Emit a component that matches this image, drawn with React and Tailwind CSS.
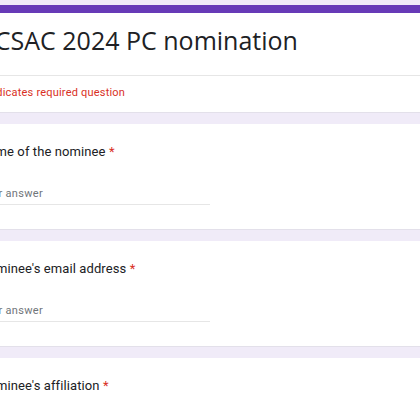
import React from "react";

const questions = [
  { id: 1, label: "Name of the nominee" },
  { id: 2, label: "Nominee's email address" },
  { id: 3, label: "Nominee's affiliation" },
];

function Question({ label }) {
  return (
    <div className="bg-white border-b border-[#e3e0ea] pt-[18px] h-[106px]">
      <div className="text-[13px] leading-[20px] text-[#202124] tracking-[0.1px]">
        {label} <span className="text-[#d93025]">*</span>
      </div>
      <div className="mt-[24px] w-[231px] border-b border-[#e6e6e6] pb-[2px]">
        <div className="text-[11px] leading-[16px] text-[#70757a] tracking-[0.3px]">
          Your answer
        </div>
      </div>
    </div>
  );
}

export default function App() {
  return (
    <div
      className="w-[420px] h-[420px] overflow-hidden bg-[#f0ebf8]"
      style={{ fontFamily: "Roboto, 'Liberation Sans', sans-serif" }}
    >
      <div className="-ml-[21px] pt-[5px] flex flex-col gap-[11px]">
        <div className="bg-white border-b border-[#e3e0ea]">
          <div className="h-[8px] bg-[#673ab7] -ml-[20px]" />
          <div
            className="pt-[11px] pb-[19px] text-[25px] leading-[32px] text-[#202124] border-b border-[#e6e6e6]"
            style={{ fontFamily: "'Open Sans', Roboto, sans-serif" }}
          >
            ACSAC 2024 PC nomination
          </div>
          <div className="pt-[9px] pb-[11px] text-[11px] leading-[16px] text-[#d93025] tracking-[0.2px]">
            * Indicates required question
          </div>
        </div>
        {questions.map((q) => (
          <Question key={q.id} label={q.label} />
        ))}
      </div>
    </div>
  );
}
